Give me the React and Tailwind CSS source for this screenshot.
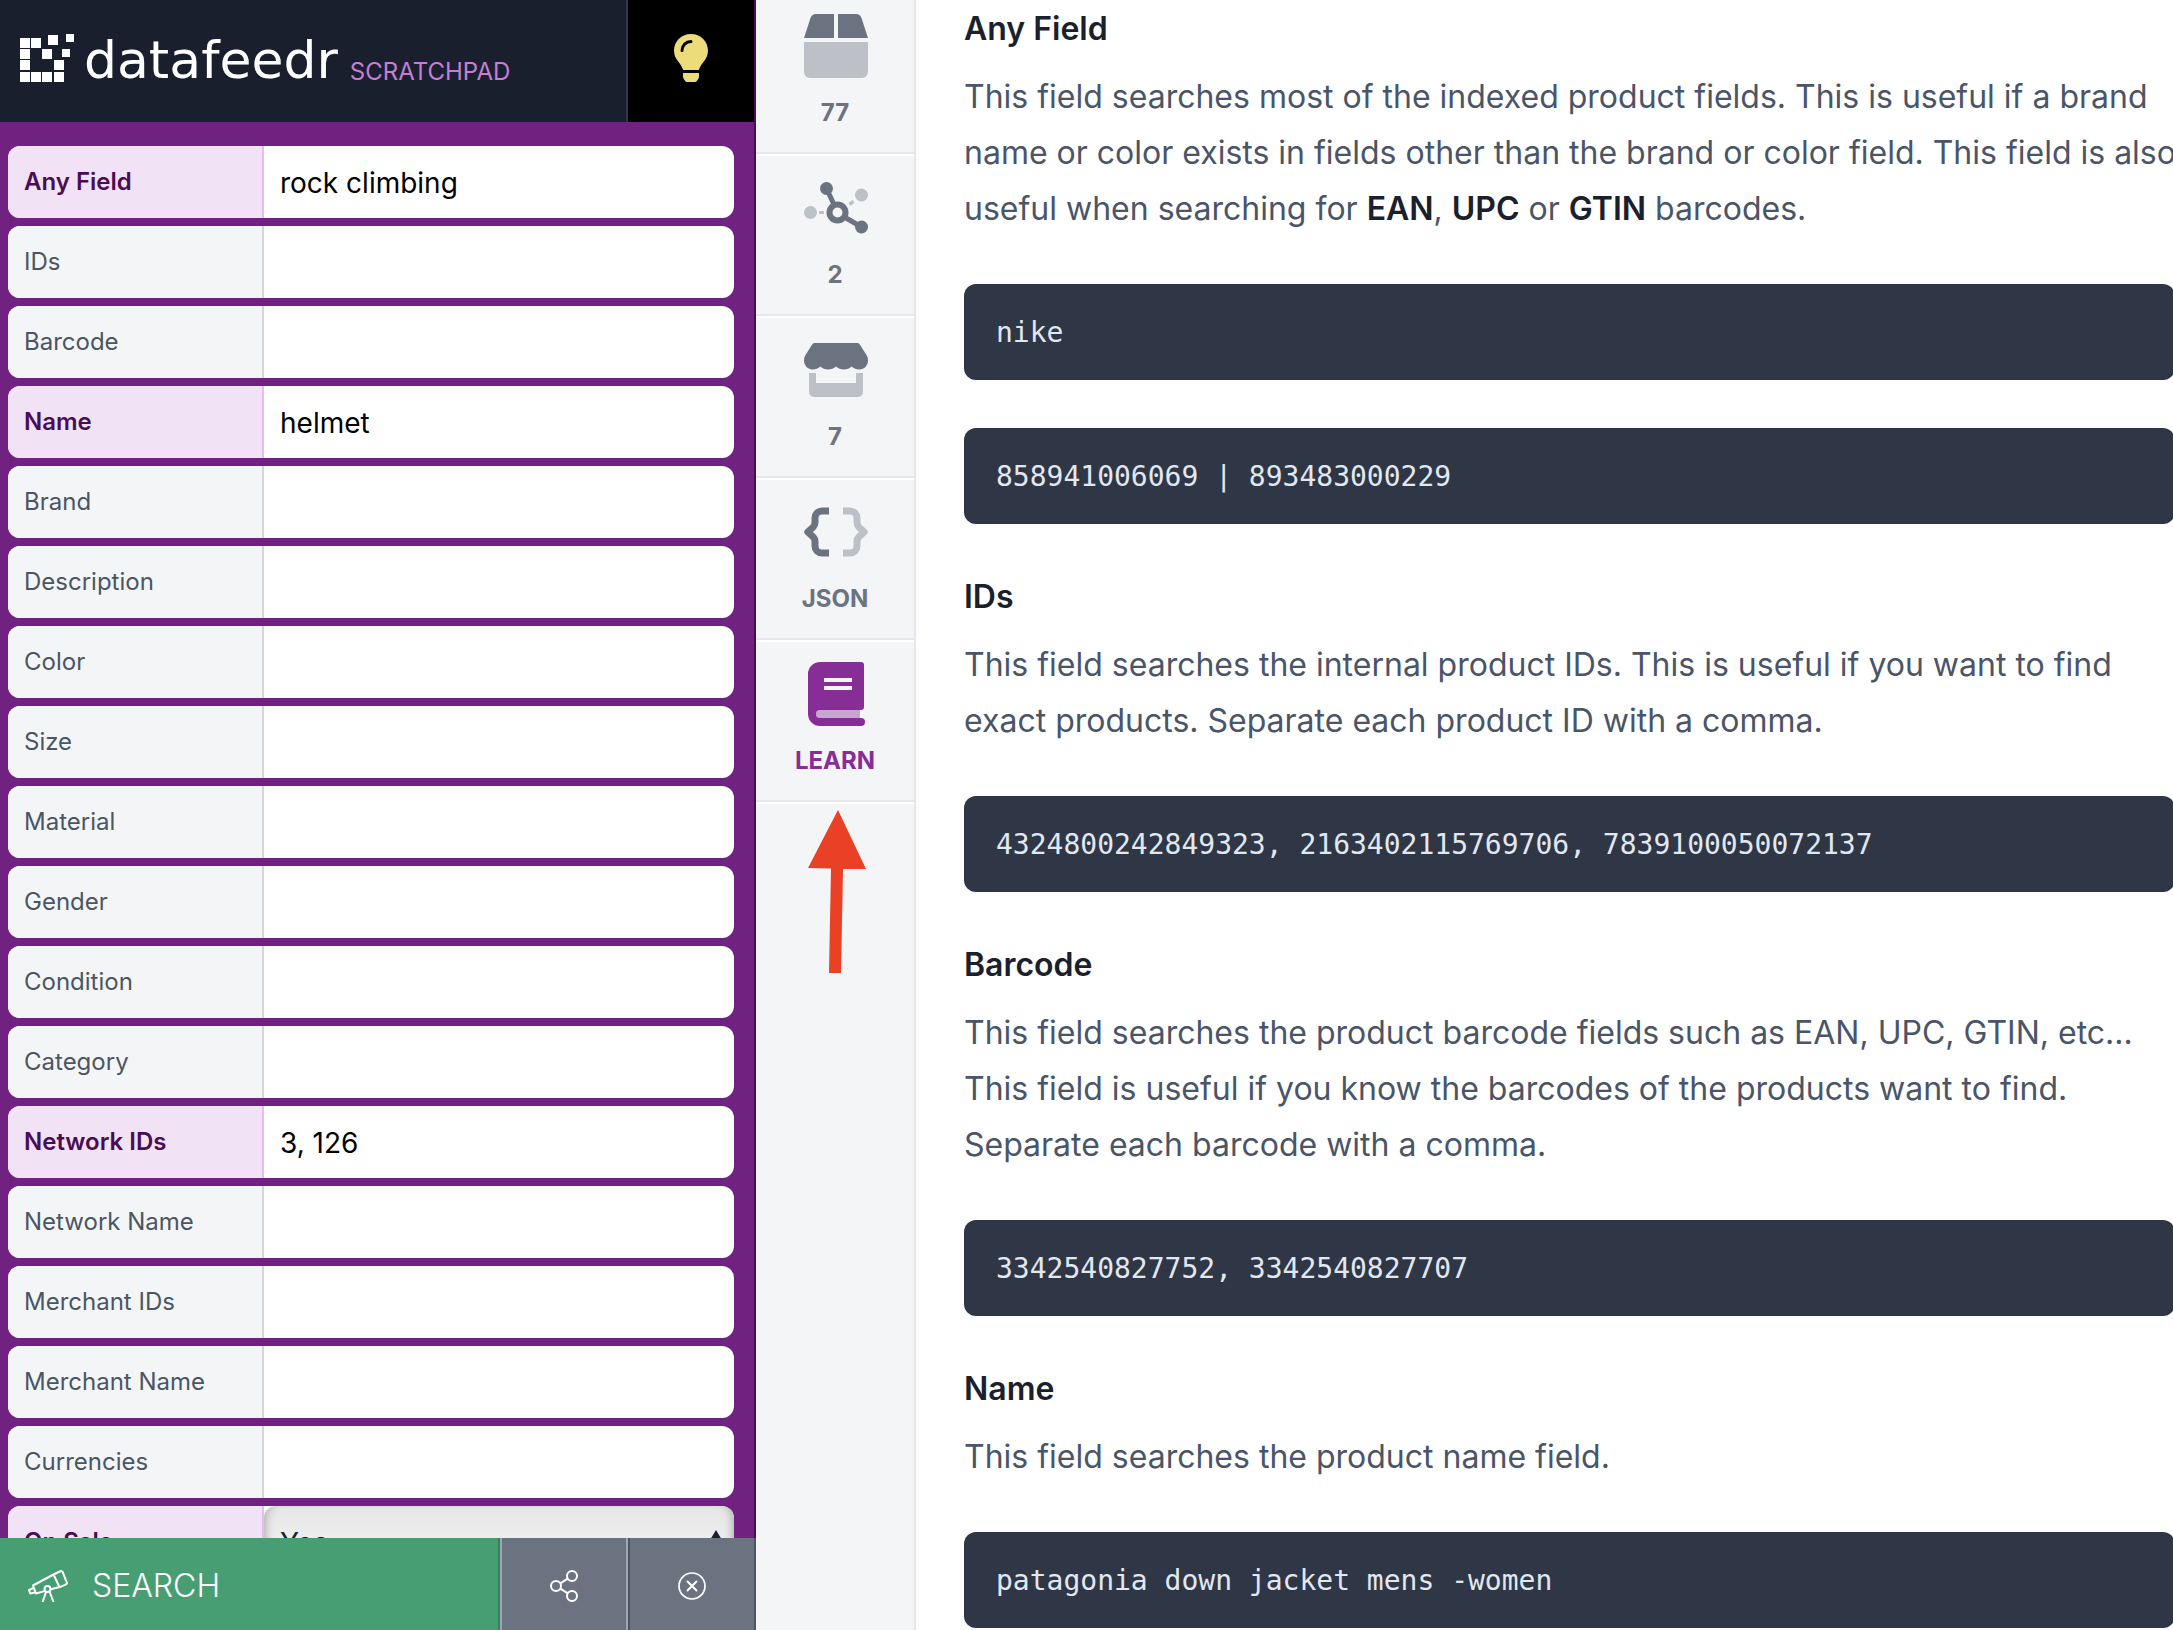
import React, { useState } from 'react';

const initialFields = [
  { id: 'any', label: 'Any Field', value: 'rock climbing' },
  { id: 'ids', label: 'IDs', value: '' },
  { id: 'barcode', label: 'Barcode', value: '' },
  { id: 'name', label: 'Name', value: 'helmet' },
  { id: 'brand', label: 'Brand', value: '' },
  { id: 'description', label: 'Description', value: '' },
  { id: 'color', label: 'Color', value: '' },
  { id: 'size', label: 'Size', value: '' },
  { id: 'material', label: 'Material', value: '' },
  { id: 'gender', label: 'Gender', value: '' },
  { id: 'condition', label: 'Condition', value: '' },
  { id: 'category', label: 'Category', value: '' },
  { id: 'network_ids', label: 'Network IDs', value: '3, 126' },
  { id: 'network_name', label: 'Network Name', value: '' },
  { id: 'merchant_ids', label: 'Merchant IDs', value: '' },
  { id: 'merchant_name', label: 'Merchant Name', value: '' },
  { id: 'currencies', label: 'Currencies', value: '' },
  { id: 'onsale', label: 'On Sale', value: 'Yes', options: ['Yes', 'No'] },
];

function Logo() {
  // pixel "D": [x, y, size]
  const squares = [
    [0, 4, 10], [11, 4, 10], [28, 1, 10], [46, 0, 8],
    [0, 15, 10], [22, 15, 10], [42, 15, 8],
    [0, 26, 10], [34, 26, 10],
    [0, 38, 10], [11, 38, 10], [22, 38, 10], [34, 38, 10],
  ];
  return (
    <svg className="w-14 h-12 shrink-0" viewBox="0 0 56 48" fill="#fff" aria-hidden="true">
      {squares.map(([x, y, s]) => <rect key={`${x}-${y}`} x={x} y={y} width={s} height={s} />)}
    </svg>
  );
}

function BulbIcon() {
  return (
    <svg className="w-[34px] h-12" viewBox="0 0 34 48" aria-hidden="true">
      <path fill="#ecdc7a" d="M17 0C7.600 0 0 7.400 0 16.500c0 4.200 1.600 8 4.200 11 1.600 1.800 4 5.500 5 8.500h15.600c1-3 3.400-6.700 5-8.500 2.600-3 4.200-6.800 4.200-11C34 7.400 26.400 0 17 0z" />
      <path fill="none" stroke="#000" strokeWidth="3" strokeLinecap="round" d="M8 16.500c0-5 4-9 9-9" />
      <path fill="#ecdc7a" d="M9 39h16v3.500c0 1-.3 1.800-.8 2.500l-1.300 2c-.5.700-1.200 1-2 1h-7.800c-.8 0-1.500-.3-2-1l-1.300-2c-.5-.7-.8-1.500-.8-2.500z" />
    </svg>
  );
}

function BoxIcon() {
  return (
    <svg className="ml-0.5 size-16" viewBox="0 0 64 64" fill="currentColor" aria-hidden="true">
      <path d="M30 0v24H0L6.500 4.100A6 6 0 0 1 12.200 0zM34 0h17.800a6 6 0 0 1 5.700 4.100L64 24H34z" />
      <path opacity=".4" d="M0 28h64v30a6 6 0 0 1-6 6H6a6 6 0 0 1-6-6z" />
    </svg>
  );
}

function NetworkIcon() {
  return (
    <svg className="ml-0.5 size-16" viewBox="0 0 64 64" aria-hidden="true">
      <g fill="currentColor" opacity=".4">
        <circle cx="6.500" cy="36.500" r="6.500" />
        <circle cx="57.500" cy="19" r="6.500" />
        <path d="M15 35h5v3h-5zM44.500 27l4-3 2 2.700-4 3z" />
      </g>
      <g stroke="currentColor" fill="none">
        <path strokeWidth="5" d="M22.500 12.500l7 15M42 42l15.500 9" />
        <circle cx="33.500" cy="36.500" r="8" strokeWidth="6" />
      </g>
      <circle cx="22.500" cy="12.500" r="6.500" fill="currentColor" />
      <circle cx="57.500" cy="51" r="6.500" fill="currentColor" />
    </svg>
  );
}

function StoreIcon() {
  return (
    <svg className="ml-0.5 size-16" viewBox="0 0 64 64" fill="currentColor" aria-hidden="true">
      <path d="M11 5h42c1.200 0 2.200.5 2.800 1.500L62.500 17c1 1.600 1.500 3.300 1.500 5.500 0 5-3.900 9-8.500 9-3 0-5.800-1-7.800-3-2 2-4.800 3-7.800 3s-5.900-1-7.900-3c-2 2-4.900 3-7.900 3s-5.800-1-7.800-3c-2 2-4.800 3-7.800 3C3.900 31.500 0 27.500 0 22.500c0-2.200.5-3.900 1.500-5.500L8.200 6.500C8.800 5.500 9.800 5 11 5z" />
      <path opacity=".4" d="M5 35h7v10h40V35h7v19a5 5 0 0 1-5 5H10a5 5 0 0 1-5-5z" />
    </svg>
  );
}

function BracesIcon() {
  return (
    <svg className="ml-0.5 size-16" viewBox="0 0 64 64" fill="none" stroke="currentColor" strokeWidth="7" strokeLinejoin="round" aria-hidden="true">
      <path d="M25 11h-7a7 7 0 0 0-7 7v4.500c0 2-.5 3.200-2 4.700L3.800 32 9 36.800c1.500 1.500 2 2.700 2 4.700V46a7 7 0 0 0 7 7h7" />
      <path opacity=".4" d="M39 11h7a7 7 0 0 1 7 7v4.500c0 2 .5 3.200 2 4.700l5.200 4.800L55 36.800c-1.500 1.500-2 2.700-2 4.700V46a7 7 0 0 1-7 7h-7" />
    </svg>
  );
}

function BookIcon() {
  return (
    <svg className="ml-0.5 size-16" viewBox="0 0 64 64" fill="currentColor" aria-hidden="true">
      <path fillRule="evenodd" d="M16 0h41a3 3 0 0 1 3 3v42a3 3 0 0 1-3 3H16a4 4 0 0 0 0 8h41a4 4 0 0 1 0 8H16A12 12 0 0 1 4 52V12A12 12 0 0 1 16 0zM20 16v4h28v-4zM20 24v4h28v-4z" />
      <path opacity=".4" d="M16 48h40v8H16a4 4 0 0 1 0-8z" />
    </svg>
  );
}

function TelescopeIcon() {
  return (
    <svg className="w-10 h-8" viewBox="0 0 40 32" fill="none" stroke="#fff" strokeWidth="2" strokeLinejoin="round" strokeLinecap="round" aria-hidden="true">
      <path d="M25.500 4.500L33 1l1.500.6L39 13l-.7 1.300-6.800 2.800zM25.500 4.500L5 15.500l3 8 8.500-2.400M31.500 17l-8.700 2.300M5.500 18L1 20l1.200 3.500 4.500-1" />
      <circle cx="19.500" cy="19" r="3" />
      <path d="M18 22l-3.200 9.500M21.500 21.500l3.800 10" />
    </svg>
  );
}

function ShareIcon() {
  return (
    <svg className="w-7 h-8" viewBox="0 0 28 32" fill="none" stroke="#fff" strokeWidth="2" aria-hidden="true">
      <circle cx="6" cy="16" r="5" />
      <circle cx="22" cy="6" r="5" />
      <circle cx="22" cy="26" r="5" />
      <path d="M10.300 13.400l7.500-4.700M10.300 18.600l7.500 4.700" />
    </svg>
  );
}

function ClearIcon() {
  return (
    <svg className="size-7" viewBox="0 0 28 28" fill="none" stroke="#fff" aria-hidden="true">
      <circle cx="14" cy="14" r="13" strokeWidth="1.700" />
      <path strokeWidth="2" strokeLinecap="round" d="M9.500 9.500l9 9M18.500 9.500l-9 9" />
    </svg>
  );
}

function FieldRow({ field, onChange }) {
  const active = field.value !== '';
  return (
    <div className="flex h-[72px] shrink-0 overflow-hidden rounded-xl bg-white">
      <label
        htmlFor={field.id}
        className={`flex w-64 shrink-0 items-center border-r-2 pl-4 text-2xl ${
          active ? 'border-[#e2bdee] bg-[#f2e2f5] font-semibold text-[#4a0d55]' : 'border-[#d2d6dc] bg-[#f4f5f7] text-[#4b5563]'
        }`}
      >
        {field.label}
      </label>
      {field.options ? (
        <div className="relative flex-1">
          <select
            id={field.id}
            value={field.value}
            onChange={(e) => onChange(field.id, e.target.value)}
            className="size-full appearance-none rounded-xl bg-linear-to-b from-[#e6e6e6] to-[#f6f6f6] px-4 pt-0.5 text-[28px] text-[#1a202c] shadow-[inset_8px_0_8px_-6px_#b0b0b0,inset_-8px_0_8px_-6px_#b0b0b0] outline-none"
          >
            {field.options.map((o) => <option key={o}>{o}</option>)}
          </select>
          <svg className="pointer-events-none absolute right-3 top-6 w-3 h-6" viewBox="0 0 12 24" fill="#1a202c" aria-hidden="true">
            <path d="M6 0l6 10H0zM6 24l6-10H0z" />
          </svg>
        </div>
      ) : (
        <input
          id={field.id}
          type="text"
          value={field.value}
          onChange={(e) => onChange(field.id, e.target.value)}
          className="min-w-0 flex-1 px-4 pt-0.5 text-[28px] text-black outline-none"
        />
      )}
    </div>
  );
}

const tabs = [
  { label: '77', Icon: BoxIcon },
  { label: '2', Icon: NetworkIcon },
  { label: '7', Icon: StoreIcon },
  { label: 'JSON', Icon: BracesIcon },
  { label: 'LEARN', Icon: BookIcon, active: true },
];

const B = ({ children }) => <strong className="font-semibold text-[#1a202c]">{children}</strong>;

const docs = [
  {
    title: 'Any Field',
    body: (
      <>
        This field searches most of the indexed product fields. This is useful if a brand name or color exists in fields
        other than the brand or color field. This field is also useful when searching for <B>EAN</B>, <B>UPC</B> or{' '}
        <B>GTIN</B> barcodes.
      </>
    ),
    examples: ['nike', '858941006069 | 893483000229'],
  },
  {
    title: 'IDs',
    body: 'This field searches the internal product IDs. This is useful if you want to find exact products. Separate each product ID with a comma.',
    examples: ['4324800242849323, 2163402115769706, 7839100050072137'],
  },
  {
    title: 'Barcode',
    body: 'This field searches the product barcode fields such as EAN, UPC, GTIN, etc... This field is useful if you know the barcodes of the products want to find. Separate each barcode with a comma.',
    examples: ['3342540827752, 3342540827707'],
  },
  {
    title: 'Name',
    body: 'This field searches the product name field.',
    examples: ['patagonia down jacket mens -women'],
  },
];

function App() {
  const [fields, setFields] = useState(initialFields);

  const updateField = (id, value) => {
    setFields((prev) => prev.map((f) => (f.id === id ? { ...f, value } : f)));
  };

  return (
    <div className="flex h-screen overflow-hidden bg-white font-[Inter,sans-serif]">
      <aside className="flex w-[756px] shrink-0 flex-col border-r-2 border-[#4a0d55] bg-[#702280]">
        <header className="flex h-[122px] shrink-0">
          <div className="flex flex-1 items-center border-r-2 border-[#2d3748] bg-[#1a1f2e] pb-1.5 pl-5">
            <Logo />
            <div className="flex items-end gap-3 pt-1 pl-2">
              <span className="font-['DejaVu_Sans',sans-serif] text-[52px] leading-[56px] text-white">datafeedr</span>
              <span className="text-2xl leading-8 text-[#c27fd4]">SCRATCHPAD</span>
            </div>
          </div>
          <button type="button" aria-label="Tips" className="flex w-[126px] items-center justify-center bg-black pb-1.5">
            <BulbIcon />
          </button>
        </header>

        <form className="flex min-h-0 flex-1 flex-col gap-2 overflow-hidden pt-6 pr-5 pl-2">
          {fields.map((f) => <FieldRow key={f.id} field={f} onChange={updateField} />)}
        </form>

        <footer className="-mr-0.5 flex h-[92px] shrink-0">
          <button type="button" className="flex flex-1 items-center gap-6 border-r-2 border-[#38815c] bg-[#489e73] pl-7 pt-1 text-[32px] font-light text-white">
            <TelescopeIcon />
            SEARCH
          </button>
          <button type="button" aria-label="Share" className="flex w-32 items-center justify-center border-x-2 border-[#9fa6b2] bg-[#6b7280] pt-1">
            <ShareIcon />
          </button>
          <button type="button" aria-label="Clear" className="flex w-32 items-center justify-center border-x-2 border-[#4b5563] bg-[#6b7280] pt-1">
            <ClearIcon />
          </button>
        </footer>
      </aside>

      <nav className="w-40 shrink-0 border-r-2 border-[#e5e7eb] bg-[#f4f5f7]">
        <div className="-mt-2 flex flex-col">
          {tabs.map(({ label, Icon, active }) => (
            <button
              key={label}
              type="button"
              className={`flex h-[162px] flex-col items-center gap-[21px] border-t-2 border-b-2 border-t-white border-b-[#e5e7eb] pt-5 ${
                active ? 'text-[#862e96]' : 'text-[#6b7280]'
              }`}
            >
              <Icon />
              <span className="text-2xl leading-7 font-bold">{label}</span>
            </button>
          ))}
        </div>
        <div className="flex justify-center border-t-2 border-white pt-1.5 pl-1">
          <svg className="w-[60px] h-[164px]" viewBox="0 0 60 164" fill="#ea4025" aria-hidden="true">
            <path d="M31 0l28 59H36l-2 104H22l2-104.500L1 58z" />
          </svg>
        </div>
      </nav>

      <main className="min-w-0 flex-1 overflow-hidden pt-[5px] pl-12">
        <div className="-mr-0.5 flex flex-col gap-px">
          {docs.map((d) => (
            <section key={d.title}>
              <h3 className="mb-4 text-[32px] leading-[48px] font-semibold text-[#1a202c]">{d.title}</h3>
              <p className="-mr-2 mb-[47px] text-[32px] leading-[56px] text-[#4a5568]">{d.body}</p>
              {d.examples.map((ex) => (
                <pre key={ex} className="mb-12 rounded-xl bg-[#2f3646] px-8 pt-[25px] pb-[23px] text-[28px] leading-[48px] text-[#e2e8f0]">
                  <code className="block font-['DejaVu_Sans_Mono',monospace]">{ex}</code>
                </pre>
              ))}
            </section>
          ))}
        </div>
      </main>
    </div>
  );
}

export default App;
